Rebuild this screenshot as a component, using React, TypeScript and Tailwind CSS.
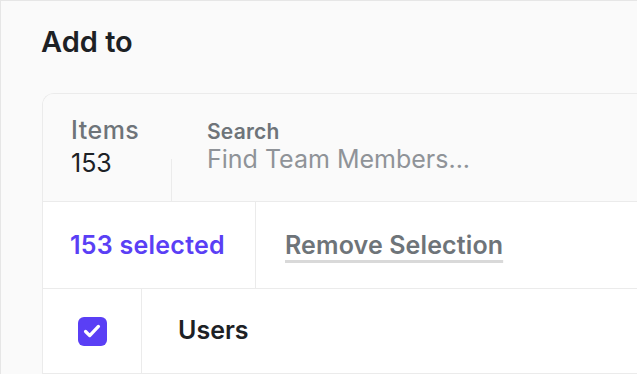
export default function App() {
  return (
    <div
      className="h-[374px] w-[637px] overflow-hidden border-l border-t border-[#e6e6e6] bg-[#fafafa] pl-[41px] pt-[22px]"
      style={{ fontFamily: 'Inter, "Noto Sans", sans-serif' }}
    >
      <h1 className="-ml-px text-[29px] font-semibold leading-[38px] text-[#1d2125]">Add to</h1>

      <div className="mt-[32px] w-[700px] overflow-hidden rounded-tl-[12px] border-l border-t border-[#ebebeb]">
        {/* header: items + search */}
        <div className="flex h-[108px] items-end border-b border-[#ebebeb] bg-[#fafafa]">
          <div className="flex h-full w-[128px] flex-col pl-[28px] pt-[21px]">
            <span className="text-[25px] font-medium leading-[31px] tracking-[0.02em] text-[#6e7479]">Items</span>
            <span className="mt-[2px] text-[25px] leading-[31px] text-[#1d2125]">153</span>
          </div>
          <div className="h-[42px] w-px bg-[#ebebeb]" />
          <div className="flex h-full flex-col pl-[35px] pt-[25px]">
            <span className="text-[21px] font-semibold leading-[25px] tracking-[0.01em] text-[#6e7479]">Search</span>
            <input
              className="w-[340px] bg-transparent text-[25px] leading-[30px] text-[#1d2125] outline-none placeholder:text-[#8f9398]"
              placeholder="Find Team Members..."
            />
          </div>
        </div>

        {/* selection row */}
        <div className="flex h-[87px] border-b border-[#ebebeb] bg-white">
          <div className="flex w-[213px] items-center border-r border-[#ebebeb] pl-[27px] pt-[2px]">
            <span className="text-[25px] font-semibold tracking-[0.01em] text-[#5a3ff5]">153 selected</span>
          </div>
          <div className="flex items-center pl-[29px] pt-[2px]">
            <button className="text-[25px] font-semibold tracking-[0.005em] text-[#6e7479] underline decoration-[#d9d9d9] decoration-[3px] underline-offset-[6px]">
              Remove Selection
            </button>
          </div>
        </div>

        {/* users row */}
        <div className="flex h-[85px] border-b border-[#ebebeb] bg-white">
          <div className="flex w-[99px] items-center justify-center border-r border-[#ebebeb]">
            <div className="flex h-[29px] w-[29px] items-center justify-center rounded-[6px] bg-[#5a3ff5]">
              <svg width="22" height="22" viewBox="0 0 24 24" fill="none" stroke="white" strokeWidth="3.6" strokeLinecap="round" strokeLinejoin="round">
                <path d="M5 12.5l4.5 4.5L19 7" />
              </svg>
            </div>
          </div>
          <div className="flex items-center pl-[36px]">
            <span className="text-[25px] font-semibold text-[#1d2125]">Users</span>
          </div>
        </div>
      </div>
    </div>
  )
}
